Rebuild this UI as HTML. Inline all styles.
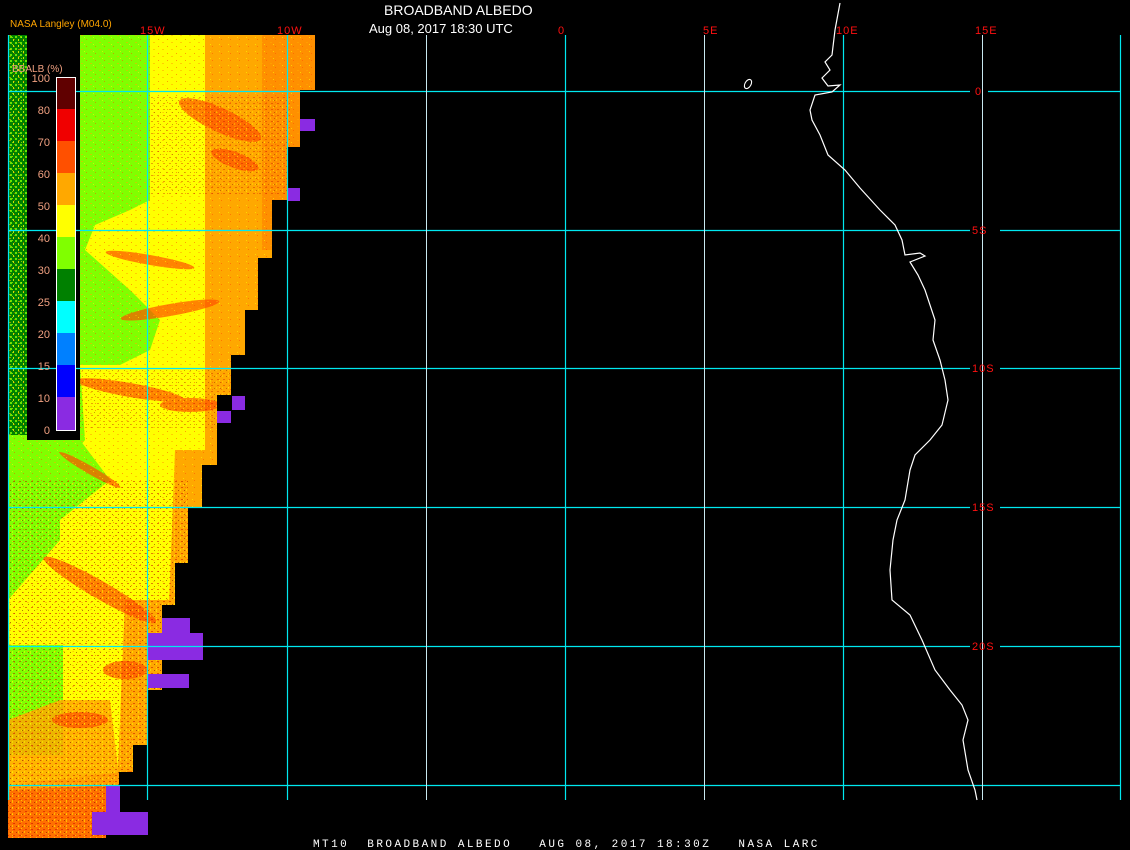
<!DOCTYPE html>
<html><head><meta charset="utf-8"><style>
html,body{margin:0;padding:0;background:#000;width:1130px;height:850px;overflow:hidden}
svg{display:block}
text{font-family:"Liberation Sans",sans-serif}
</style></head><body>
<svg width="1130" height="850" viewBox="0 0 1130 850" xmlns="http://www.w3.org/2000/svg">
<defs>
<clipPath id="land">
<polygon points="8,35 315,35 315,90 300,90 300,147 287,147 287,200 272,200 272,258 258,258 258,310 245,310 245,355 231,355 231,395 217,395 217,465 202,465 202,507 188,507 188,563 175,563 175,605 162,605 162,690 147,690 147,745 133,745 133,772 119,772 119,785 106,785 106,838 8,838"/>
</clipPath>
<pattern id="spk" width="9" height="7" patternUnits="userSpaceOnUse">
<rect x="0" y="0" width="2" height="1" fill="#ffa800"/><rect x="5" y="4" width="1" height="1" fill="#ff5000"/><rect x="3" y="2" width="1" height="1" fill="#ffff00"/>
</pattern>
<pattern id="spkg" width="5" height="6" patternUnits="userSpaceOnUse">
<rect x="0" y="0" width="2" height="2" fill="#80ff00"/><rect x="3" y="3" width="1" height="2" fill="#ffff00"/>
</pattern>
<pattern id="spk2" width="6" height="6" patternUnits="userSpaceOnUse">
<rect x="1" y="1" width="2" height="1" fill="#c00000"/><rect x="4" y="4" width="1" height="1" fill="#600000"/><rect x="0" y="3" width="1" height="2" fill="#ffff00"/>
</pattern>
</defs>
<g clip-path="url(#land)">
<rect x="8" y="35" width="310" height="805" fill="#ffff00"/>
<polygon points="8,35 150,35 150,200 130,210 95,225 85,250 130,290 160,320 150,350 120,365 80,365 85,440 60,470 60,540 8,600" fill="#80ff00"/>
<polygon points="8,440 80,440 110,480 60,520 8,520" fill="#80ff00"/>
<rect x="8" y="645" width="55" height="110" fill="#80ff00"/>
<rect x="8" y="35" width="20" height="400" fill="#008000"/>
<rect x="8" y="35" width="20" height="400" fill="url(#spkg)" opacity="0.8"/>
<polygon points="205,35 318,35 318,838 205,838" fill="#ffa800"/>
<polygon points="262,35 318,35 318,250 262,250" fill="#ff8000" opacity="0.6"/>
<polygon points="175,450 220,450 220,838 160,838" fill="#ffa800"/>
<polygon points="125,600 175,600 175,838 115,838" fill="#ffa800"/>
<polygon points="8,785 140,770 140,838 8,838" fill="#ff7000"/>
<polygon points="8,720 60,700 110,700 120,785 8,790" fill="#ffa800" opacity="0.85"/>
<g fill="#ff5000" opacity="0.7">
<ellipse cx="220" cy="120" rx="45" ry="12" transform="rotate(25 220 120)"/>
<ellipse cx="235" cy="160" rx="25" ry="8" transform="rotate(20 235 160)"/>
<ellipse cx="150" cy="260" rx="45" ry="5" transform="rotate(10 150 260)"/>
<ellipse cx="170" cy="310" rx="50" ry="6" transform="rotate(-10 170 310)"/>
<ellipse cx="130" cy="390" rx="55" ry="7" transform="rotate(10 130 390)"/>
<ellipse cx="190" cy="405" rx="30" ry="7"/>
<ellipse cx="90" cy="470" rx="35" ry="4" transform="rotate(30 90 470)"/>
<ellipse cx="100" cy="590" rx="65" ry="9" transform="rotate(30 100 590)"/>
<ellipse cx="125" cy="670" rx="22" ry="9"/>
<ellipse cx="80" cy="720" rx="28" ry="8"/>
</g>
<rect x="8" y="35" width="310" height="805" fill="url(#spk)" opacity="0.55"/>
<rect x="8" y="480" width="180" height="360" fill="url(#spk2)" opacity="0.5"/>
<rect x="150" y="95" width="140" height="100" fill="url(#spk2)" opacity="0.35"/>
<rect x="80" y="370" width="150" height="60" fill="url(#spk2)" opacity="0.35"/>
</g>
<rect x="27" y="35" width="53" height="405" fill="#000"/>
<g fill="#8a2be2">
<rect x="300" y="119" width="15" height="12"/><rect x="287" y="188" width="13" height="13"/>
<rect x="232" y="396" width="13" height="14"/><rect x="217" y="411" width="14" height="12"/>
<rect x="162" y="618" width="28" height="20"/><rect x="148" y="633" width="55" height="27"/>
<rect x="148" y="674" width="41" height="14"/>
<rect x="106" y="786" width="14" height="30"/><rect x="92" y="812" width="56" height="23"/>
</g>
<g stroke="#00e8f0" stroke-width="1.2" fill="none">
<line x1="8.5" y1="35" x2="8.5" y2="800"/>
<line x1="147.5" y1="35" x2="147.5" y2="800"/>
<line x1="287.5" y1="35" x2="287.5" y2="800"/>
<line x1="565.5" y1="35" x2="565.5" y2="800"/>
<line x1="843.5" y1="35" x2="843.5" y2="800"/>
<line x1="1120.5" y1="35" x2="1120.5" y2="800"/>
<line x1="8" y1="91.5" x2="970" y2="91.5"/><line x1="988" y1="91.5" x2="1120" y2="91.5"/>
<line x1="8" y1="230.5" x2="970" y2="230.5"/><line x1="1000" y1="230.5" x2="1120" y2="230.5"/>
<line x1="8" y1="368.5" x2="970" y2="368.5"/><line x1="1000" y1="368.5" x2="1120" y2="368.5"/>
<line x1="8" y1="507.5" x2="970" y2="507.5"/><line x1="1000" y1="507.5" x2="1120" y2="507.5"/>
<line x1="8" y1="646.5" x2="970" y2="646.5"/><line x1="1000" y1="646.5" x2="1120" y2="646.5"/>
<line x1="8" y1="785.5" x2="1120" y2="785.5"/>
</g>
<g stroke="#c8e8f0" stroke-width="1" fill="none">
<line x1="426.5" y1="35" x2="426.5" y2="800"/>
<line x1="704.5" y1="35" x2="704.5" y2="800"/>
<line x1="982.5" y1="35" x2="982.5" y2="800"/>
</g>
<polyline fill="none" stroke="#fff" stroke-width="1.2" points="840,3 835,30 832,55 825,62 830,70 822,78 828,86 840,85 832,92 815,95 810,110 812,120 820,135 828,155 845,170 860,188 880,210 895,225 902,240 905,255 920,253 925,256 910,262 918,275 925,290 935,320 933,340 940,360 945,380 948,400 942,425 930,440 915,455 910,470 905,500 897,520 893,540 890,570 892,600 910,615 922,640 935,670 950,690 962,705 968,720 963,740 968,770 975,790 977,800"/>
<ellipse cx="748" cy="84" rx="3" ry="5" transform="rotate(30 748 84)" fill="none" stroke="#fff" stroke-width="1.1"/>
<g fill="#ff1010" font-size="11" style="letter-spacing:1px">
<text x="140" y="34">15W</text><text x="277" y="34">10W</text><text x="558" y="34">0</text>
<text x="703" y="34">5E</text><text x="836" y="34">10E</text><text x="975" y="34">15E</text>
<text x="975" y="95">0</text><text x="972" y="234">5S</text><text x="972" y="372">10S</text>
<text x="972" y="511">15S</text><text x="972" y="650">20S</text>
</g>
<text x="384" y="15" fill="#fff" font-size="14">BROADBAND ALBEDO</text>
<text x="369" y="33" fill="#fff" font-size="13">Aug 08, 2017 18:30 UTC</text>
<text x="10" y="27" fill="#ffa500" font-size="10">NASA Langley (M04.0)</text>
<g>
<rect x="57" y="77" width="18" height="32" fill="#600000"/>
<rect x="57" y="109" width="18" height="32" fill="#f00000"/>
<rect x="57" y="141" width="18" height="32" fill="#ff5000"/>
<rect x="57" y="173" width="18" height="32" fill="#ffa800"/>
<rect x="57" y="205" width="18" height="32" fill="#ffff00"/>
<rect x="57" y="237" width="18" height="32" fill="#80ff00"/>
<rect x="57" y="269" width="18" height="32" fill="#008000"/>
<rect x="57" y="301" width="18" height="32" fill="#00ffff"/>
<rect x="57" y="333" width="18" height="32" fill="#0080ff"/>
<rect x="57" y="365" width="18" height="32" fill="#0000ff"/>
<rect x="57" y="397" width="18" height="33" fill="#8a2be2"/>
<rect x="56.5" y="77.5" width="19" height="353" fill="none" stroke="#fff" stroke-width="1"/>
</g>
<g fill="#f0a080" font-size="11" text-anchor="end">
<text x="50" y="82">100</text><text x="50" y="114">80</text><text x="50" y="146">70</text>
<text x="50" y="178">60</text><text x="50" y="210">50</text><text x="50" y="242">40</text>
<text x="50" y="274">30</text><text x="50" y="306">25</text><text x="50" y="338">20</text>
<text x="50" y="370">15</text><text x="50" y="402">10</text><text x="50" y="434">0</text>
</g>
<text x="12" y="72" fill="#f0a080" font-size="10">BBALB (%)</text>
<text x="313" y="847" fill="#fff" font-size="11" style="font-family:'Liberation Mono',monospace;letter-spacing:2.45px" xml:space="preserve">MT10  BROADBAND ALBEDO   AUG 08, 2017 18:30Z   NASA LARC</text>
</svg>
</body></html>
